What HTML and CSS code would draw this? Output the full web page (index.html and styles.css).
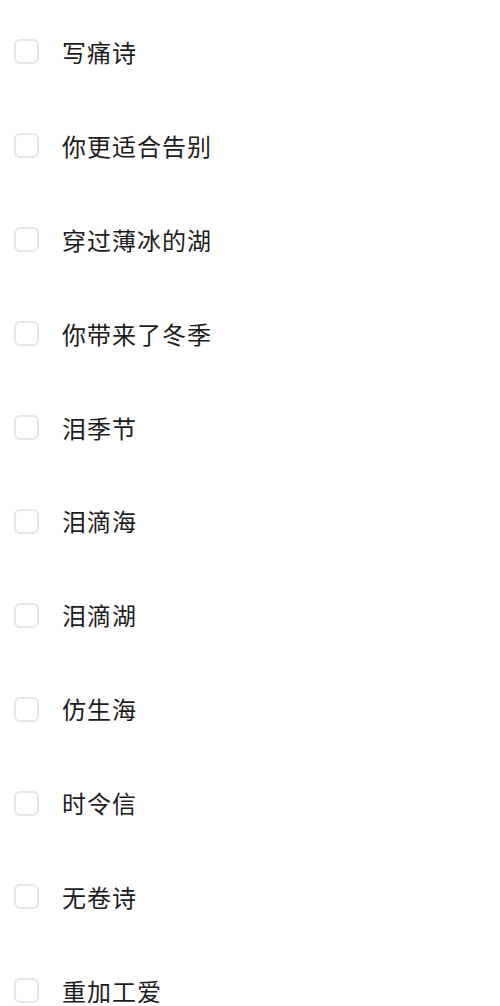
FILE: index.html
```html
<!DOCTYPE html>
<html lang="zh">
<head>
<meta charset="utf-8">
<link rel="stylesheet" href="styles.css">
</head>
<body>
<ul class="list">
  <li class="item"><span class="box"></span><span class="label">写痛诗</span></li>
  <li class="item"><span class="box"></span><span class="label">你更适合告别</span></li>
  <li class="item"><span class="box"></span><span class="label">穿过薄冰的湖</span></li>
  <li class="item"><span class="box"></span><span class="label">你带来了冬季</span></li>
  <li class="item"><span class="box"></span><span class="label">泪季节</span></li>
  <li class="item"><span class="box"></span><span class="label">泪滴海</span></li>
  <li class="item"><span class="box"></span><span class="label">泪滴湖</span></li>
  <li class="item"><span class="box"></span><span class="label">仿生海</span></li>
  <li class="item"><span class="box"></span><span class="label">时令信</span></li>
  <li class="item"><span class="box"></span><span class="label">无卷诗</span></li>
  <li class="item"><span class="box"></span><span class="label">重加工爱</span></li>
</ul>
</body>
</html>
```
FILE: styles.css
```css
html, body {
  margin: 0;
  padding: 0;
  background: #ffffff;
}
body {
  font-family: "Noto Sans CJK SC", "Noto Sans", sans-serif;
  overflow: hidden;
}
.list {
  list-style: none;
  margin: 0;
  padding: 5px 0 0 14px;
}
.item {
  height: 93.9px;
  display: flex;
  align-items: center;
  gap: 23px;
}
.box {
  box-sizing: border-box;
  width: 25px;
  height: 25px;
  border: 2px solid #e3e7ec;
  border-radius: 6px;
  flex: none;
}
.label {
  font-size: 24px;
  color: #1c1c1c;
  line-height: 1;
  letter-spacing: 1px;
}
```
